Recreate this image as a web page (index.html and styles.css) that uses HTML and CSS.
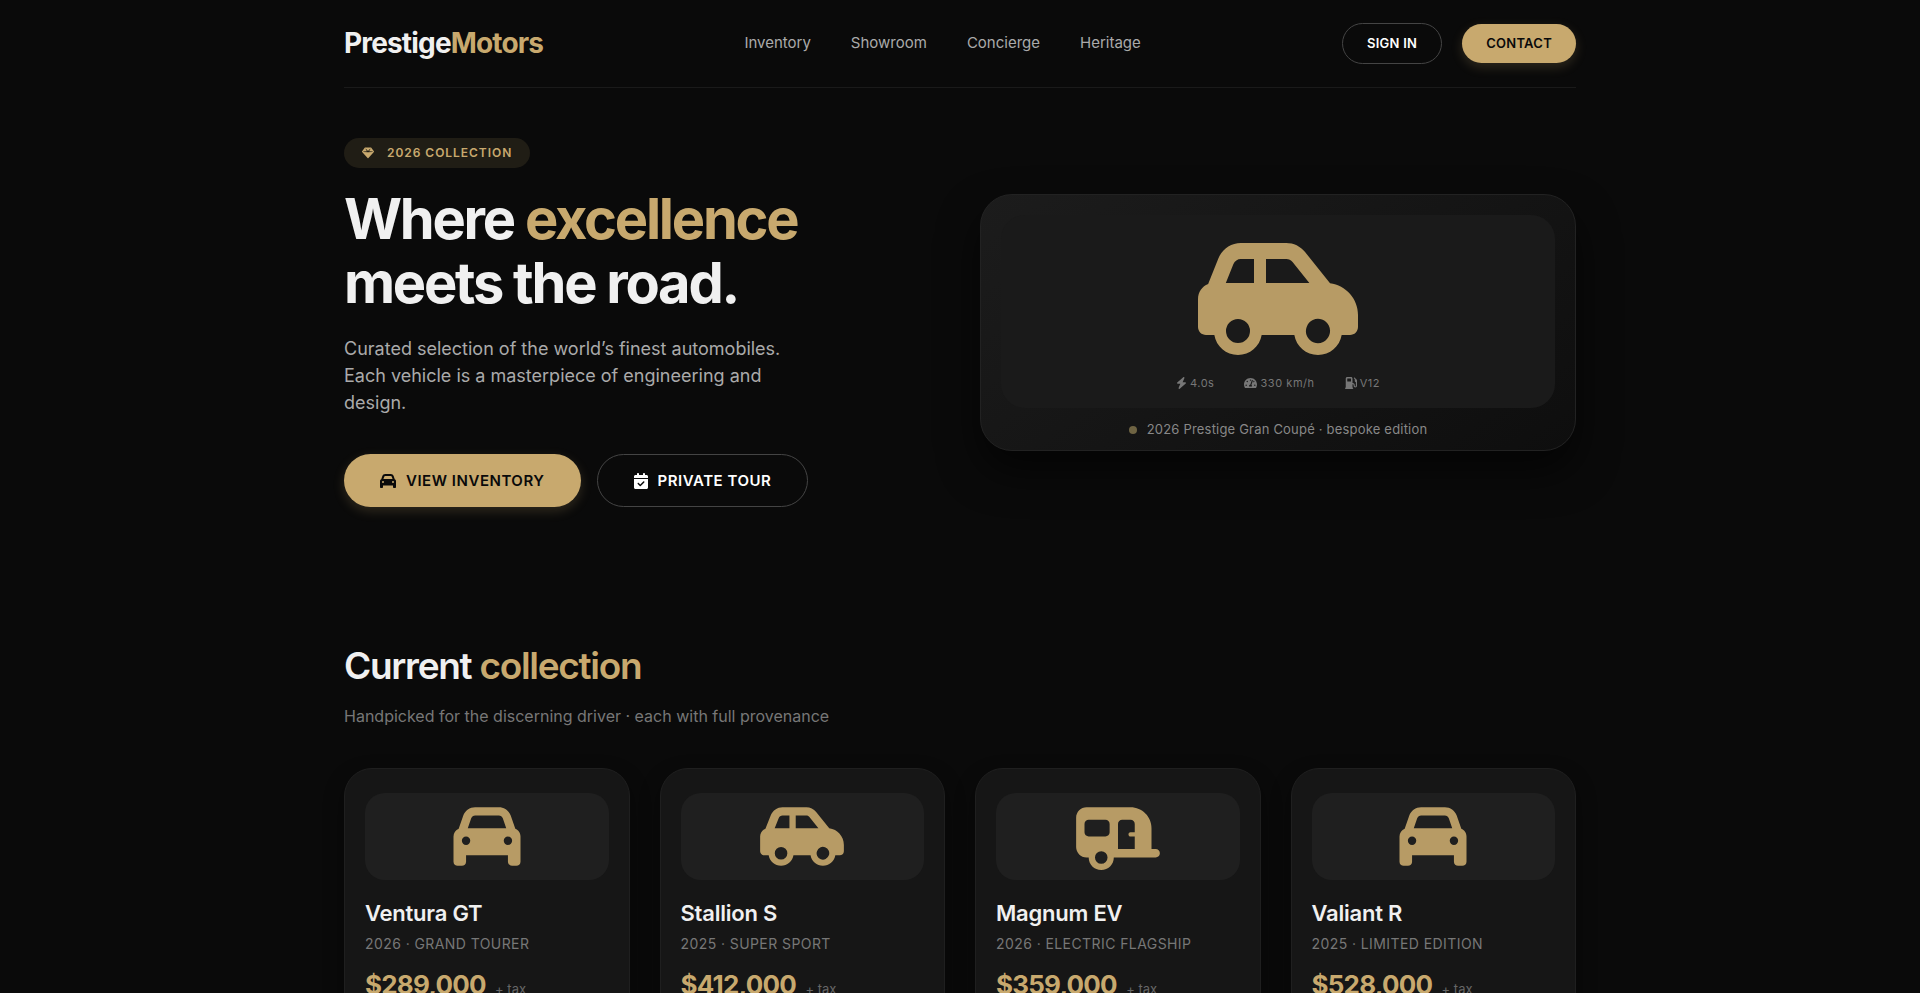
FILE: index.html
```html
<!DOCTYPE html>
<html lang="en">
<head>
    <meta charset="UTF-8">
    <meta name="viewport" content="width=device-width, initial-scale=1.0">
    <title>PrestigeMotors</title>
    <link rel="stylesheet" href="styles.css">
</head>
<body>
    <!-- shared icons -->
    <svg class="sprite" aria-hidden="true">
        <symbol id="i-car" viewBox="0 0 512 512"><path d="M135.2 117.4L109.1 192H402.9l-26.1-74.6C372.3 104.6 360.2 96 346.6 96H165.4c-13.6 0-25.7 8.6-30.2 21.4zM39.6 196.8L74.8 96.3C88.3 57.8 124.6 32 165.4 32H346.6c40.8 0 77.1 25.8 90.6 64.3l35.2 100.5c23.2 9.6 39.6 32.5 39.6 59.2V400v48c0 17.7-14.3 32-32 32H448c-17.7 0-32-14.3-32-32V400H96v48c0 17.7-14.3 32-32 32H32c-17.7 0-32-14.3-32-32V400 256c0-26.7 16.4-49.6 39.6-59.2zM128 288a32 32 0 1 0 -64 0 32 32 0 1 0 64 0zm288 32a32 32 0 1 0 0-64 32 32 0 1 0 0 64z"/></symbol>
        <symbol id="i-car-side" viewBox="0 0 640 512"><path d="M171.3 96H224v96H111.3l30.4-75.9C146.5 104 158.2 96 171.3 96zM272 192V96h81.2c9.7 0 18.9 4.4 25 12l67.2 84H272zm256.2 1L428.2 68c-18.2-22.8-45.8-36-75-36H171.3c-39.3 0-74.6 23.9-89.1 60.3L40.6 196.4C16.8 205.8 0 228.9 0 256V368c0 17.7 14.3 32 32 32H65.3c7.6 45.4 47.1 80 94.7 80s87.1-34.6 94.7-80H385.3c7.6 45.4 47.1 80 94.7 80s87.1-34.6 94.7-80H608c17.7 0 32-14.3 32-32V320c0-65.2-48.8-119-111.8-127zM434.7 368a48 48 0 1 1 90.5 32 48 48 0 1 1 -90.5-32zM160 336a48 48 0 1 1 0 96 48 48 0 1 1 0-96z"/></symbol>
        <symbol id="i-caravan" viewBox="0 0 640 512"><path d="M0 112C0 67.8 35.8 32 80 32H416c88.4 0 160 71.6 160 160V352h32c17.7 0 32 14.3 32 32s-14.3 32-32 32l-32 0H288c0 53-43 96-96 96s-96-43-96-96H80c-44.2 0-80-35.8-80-80V112zM320 352H448V256H416c-8.8 0-16-7.2-16-16s7.2-16 16-16h32V160c0-17.7-14.3-32-32-32H352c-17.7 0-32 14.3-32 32V352zM96 128c-17.7 0-32 14.3-32 32v64c0 17.7 14.3 32 32 32H224c17.7 0 32-14.3 32-32V160c0-17.7-14.3-32-32-32H96zm96 336a48 48 0 1 0 0-96 48 48 0 1 0 0 96z"/></symbol>
    </svg>

    <div class="container">
        <header class="navbar">
            <div class="logo">Prestige<span>Motors</span></div>
            <nav class="nav-links">
                <a href="#">Inventory</a>
                <a href="#">Showroom</a>
                <a href="#">Concierge</a>
                <a href="#">Heritage</a>
            </nav>
            <div class="nav-actions">
                <button class="btn btn-outline">Sign in</button>
                <button class="btn btn-gold">Contact</button>
            </div>
        </header>

        <section class="hero">
            <div class="hero-text">
                <div class="hero-badge">
                    <svg class="icon-badge" viewBox="0 0 512 512"><path d="M116.7 33.8c4.5-6.1 11.7-9.8 19.3-9.8H376c7.6 0 14.8 3.6 19.3 9.8l112 152c6.8 9.2 6.1 21.9-1.5 30.4l-232 256c-4.5 5-11 7.9-17.8 7.9s-13.2-2.9-17.8-7.9l-232-256c-7.7-8.5-8.3-21.2-1.5-30.4l112-152zm38.5 39.8c-3.3 2.5-4.2 7-2.1 10.5l57.4 95.6L63.3 192c-4.1 .3-7.3 3.8-7.3 8s3.2 7.6 7.3 8l192 16c.4 0 .9 0 1.3 0l192-16c4.1-.3 7.3-3.8 7.3-8s-3.2-7.6-7.3-8L301.5 179.8l57.4-95.6c2.1-3.5 1.2-8.1-2.1-10.5s-7.9-2-10.7 1L256 172.2 165.9 74.6c-2.8-3-7.4-3.4-10.7-1z"/></svg>
                    2026 collection
                </div>
                <h1>Where <span>excellence</span><br>meets the road.</h1>
                <p>Curated selection of the world’s finest automobiles. Each vehicle is a masterpiece of engineering and design.</p>
                <div class="hero-actions">
                    <button class="btn btn-gold btn-large">
                        <svg class="icon-btn"><use href="#i-car"/></svg>
                        View inventory
                    </button>
                    <button class="btn btn-outline btn-large">
                        <svg class="icon-btn icon-calendar" viewBox="0 0 448 512"><path d="M128 0c17.7 0 32 14.3 32 32V64H288V32c0-17.7 14.3-32 32-32s32 14.3 32 32V64h48c26.5 0 48 21.5 48 48v48H0V112C0 85.5 21.5 64 48 64H96V32c0-17.7 14.3-32 32-32zM0 192H448V464c0 26.5-21.5 48-48 48H48c-26.5 0-48-21.5-48-48V192zM329 305c9.4-9.4 9.4-24.6 0-33.9s-24.6-9.4-33.9 0l-95 95-47-47c-9.4-9.4-24.6-9.4-33.9 0s-9.4 24.6 0 33.9l64 64c9.4 9.4 24.6 9.4 33.9 0L329 305z"/></svg>
                        Private tour
                    </button>
                </div>
            </div>

            <div class="hero-card">
                <div class="hero-visual">
                    <svg class="icon-hero"><use href="#i-car-side"/></svg>
                    <div class="hero-specs">
                        <span>
                            <svg class="icon-spec icon-bolt" viewBox="0 0 448 512"><path d="M349.4 44.6c5.9-13.7 1.5-29.7-10.6-38.5s-28.6-8-39.9 1.8l-256 224c-10 8.8-13.6 22.9-8.9 35.3S50.7 288 64 288H175.5L98.6 467.4c-5.9 13.7-1.5 29.7 10.6 38.5s28.6 8 39.9-1.8l256-224c10-8.8 13.6-22.9 8.9-35.3s-16.6-20.7-30-20.7H272.5L349.4 44.6z"/></svg>
                            4.0s
                        </span>
                        <span>
                            <svg class="icon-spec icon-gauge" viewBox="0 0 576 512"><path d="M288 32C128.94 32 0 160.94 0 320c0 52.8 14.25 102.26 39.06 144.8 5.61 9.62 16.3 15.2 27.44 15.2h443c11.14 0 21.83-5.58 27.44-15.2C561.75 422.26 576 372.8 576 320c0-159.06-128.94-288-288-288zm0 64c14.71 0 26.58 10.13 30.32 23.65-1.11 2.26-2.64 4.23-3.45 6.67l-9.22 27.67c-5.13 3.49-10.97 6.01-17.64 6.01-17.67 0-32-14.33-32-32S270.33 96 288 96zM96 384c-17.67 0-32-14.33-32-32s14.33-32 32-32 32 14.33 32 32-14.33 32-32 32zm48-160c-17.67 0-32-14.33-32-32s14.33-32 32-32 32 14.33 32 32-14.33 32-32 32zm246.77-72.41l-61.33 184C343.13 347.33 352 364.54 352 384c0 11.72-3.38 22.55-8.88 32H232.88c-5.5-9.45-8.88-20.28-8.88-32 0-33.94 26.5-61.43 59.9-63.59l61.34-184.01c4.17-12.56 17.73-19.45 30.36-15.17 12.57 4.19 19.35 17.79 15.17 30.36zm14.66 57.2l15.52-46.55c3.47-1.29 7.13-2.23 11.05-2.23 17.67 0 32 14.33 32 32s-14.33 32-32 32c-11.38-.01-21.25-6.09-26.57-15.22zM480 384c-17.67 0-32-14.33-32-32s14.33-32 32-32 32 14.33 32 32-14.33 32-32 32z"/></svg>
                            330 km/h
                        </span>
                        <span>
                            <svg class="icon-spec icon-pump" viewBox="0 0 512 512"><path d="M32 64C32 28.7 60.7 0 96 0H256c35.3 0 64 28.7 64 64V256h8c48.6 0 88 39.4 88 88v32c0 13.3 10.7 24 24 24s24-10.7 24-24V222c-27.6-7.1-48-32.2-48-62V96L384 64c-8.8-8.8-8.8-23.2 0-32s23.2-8.8 32 0l77.3 77.3c12 12 18.7 28.3 18.7 45.3V376c0 39.8-32.2 72-72 72s-72-32.2-72-72V344c0-22.1-17.9-40-40-40h-8V448c17.7 0 32 14.3 32 32s-14.3 32-32 32H32c-17.7 0-32-14.3-32-32s14.3-32 32-32V64zM96 80v96c0 8.8 7.2 16 16 16H240c8.8 0 16-7.2 16-16V80c0-8.8-7.2-16-16-16H112c-8.8 0-16 7.2-16 16z"/></svg>
                            V12
                        </span>
                    </div>
                </div>
                <div class="hero-caption"><i class="dot"></i>2026 Prestige Gran Coupé · bespoke edition</div>
            </div>
        </section>

        <section class="collection">
            <h2>Current <span>collection</span></h2>
            <p class="section-sub">Handpicked for the discerning driver · each with full provenance</p>

            <div class="car-grid">
                <article class="car-card">
                    <div class="car-image"><svg class="icon-car"><use href="#i-car"/></svg></div>
                    <h3>Ventura GT</h3>
                    <div class="car-type">2026 · Grand Tourer</div>
                    <div class="car-price">$289,000 <small>+ tax</small></div>
                </article>
                <article class="car-card">
                    <div class="car-image"><svg class="icon-car"><use href="#i-car-side"/></svg></div>
                    <h3>Stallion S</h3>
                    <div class="car-type">2025 · Super Sport</div>
                    <div class="car-price">$412,000 <small>+ tax</small></div>
                </article>
                <article class="car-card">
                    <div class="car-image"><svg class="icon-car"><use href="#i-caravan"/></svg></div>
                    <h3>Magnum EV</h3>
                    <div class="car-type">2026 · Electric Flagship</div>
                    <div class="car-price">$359,000 <small>+ tax</small></div>
                </article>
                <article class="car-card">
                    <div class="car-image"><svg class="icon-car"><use href="#i-car"/></svg></div>
                    <h3>Valiant R</h3>
                    <div class="car-type">2025 · Limited Edition</div>
                    <div class="car-price">$528,000 <small>+ tax</small></div>
                </article>
            </div>
        </section>
    </div>
</body>
</html>
```

FILE: styles.css
```css
* {
    margin: 0;
    padding: 0;
    box-sizing: border-box;
}

html {
    scrollbar-width: none;
}

body {
    font-family: Inter, "Liberation Sans", sans-serif;
    background-color: #0a0a0a;
    color: #f0f0f0;
    line-height: 1.5;
}

svg {
    fill: currentColor;
    flex-shrink: 0;
}

.sprite {
    display: none;
}

.container {
    max-width: 1280px;
    margin: 0 auto;
    padding: 0 24px;
}

/* navigation */
.navbar {
    display: flex;
    justify-content: space-between;
    align-items: center;
    padding: 22px 0;
    border-bottom: 1px solid #1a1a1a;
}

.logo {
    font-size: 28px;
    font-weight: 700;
    line-height: 43px;
    letter-spacing: -0.03em;
}

.logo span,
h1 span,
h2 span {
    color: #c8a96e;
}

.nav-links {
    display: flex;
    gap: 40px;
}

.nav-links a {
    color: #aaa;
    font-size: 15px;
    text-decoration: none;
}

.nav-actions {
    display: flex;
    align-items: center;
    gap: 20px;
}

.btn {
    font-family: inherit;
    font-size: 13px;
    font-weight: 600;
    line-height: 19px;
    letter-spacing: 0.02em;
    text-transform: uppercase;
    padding: 10px 24px;
    border: none;
    border-radius: 40px;
    cursor: pointer;
}

.btn-gold {
    background-color: #c8a96e;
    color: #0a0a0a;
    box-shadow: 0 4px 12px rgba(200, 169, 110, 0.2);
}

.btn-outline {
    background-color: transparent;
    color: #fff;
    border: 1px solid #444;
}

/* hero */
.hero {
    display: grid;
    grid-template-columns: 1fr 1fr;
    gap: 40px;
    align-items: center;
    padding: 50px 0 70px;
}

.hero-badge {
    display: inline-flex;
    align-items: center;
    gap: 13px;
    padding: 6px 18px;
    border-radius: 30px;
    background-color: rgba(200, 169, 110, 0.12);
    color: #c8a96e;
    font-size: 12px;
    font-weight: 600;
    letter-spacing: 0.08em;
    text-transform: uppercase;
}

.icon-badge {
    width: 12px;
    height: 12px;
}

h1 {
    margin: 19px 0 20px;
    font-size: 56px;
    font-weight: 700;
    line-height: 64px;
    letter-spacing: -0.04em;
}

.hero-text p {
    max-width: 480px;
    margin-bottom: 38px;
    color: #aaa;
    font-size: 18px;
}

.hero-actions {
    display: flex;
    gap: 16px;
}

.btn-large {
    display: flex;
    align-items: center;
    gap: 10px;
    padding: 16px 36px;
    font-size: 15px;
    letter-spacing: 0.035em;
}

.icon-btn {
    width: 16px;
    height: 16px;
}

.icon-calendar {
    width: 14px;
}

.hero-card {
    padding: 20px 20px 10px;
    border: 1px solid #222;
    border-radius: 32px;
    background: linear-gradient(145deg, #1c1c1c, #0e0e0e);
    box-shadow: 0 20px 40px rgba(0, 0, 0, 0.6);
}

.hero-visual {
    display: flex;
    flex-direction: column;
    align-items: center;
    gap: 14px;
    padding: 20px 20px 19px;
    border-radius: 24px;
    background-color: #1a1a1a;
}

.icon-hero {
    width: 160px;
    height: 128px;
    color: #b79b65;
}

.hero-specs {
    display: flex;
    gap: 30px;
    color: #777;
    font-size: 11px;
    line-height: 12px;
    letter-spacing: 0.05em;
}

.hero-specs span {
    display: flex;
    align-items: center;
    gap: 3px;
}

.icon-spec {
    width: 12px;
    height: 12px;
}

.icon-bolt {
    width: 11px;
}

.icon-gauge {
    width: 13px;
}

.hero-caption {
    display: flex;
    justify-content: center;
    align-items: center;
    gap: 10px;
    margin-top: 12px;
    color: #888;
    font-size: 13px;
    letter-spacing: 0.015em;
}

.dot {
    width: 8px;
    height: 8px;
    border-radius: 50%;
    background-color: #6f6443;
}

/* collection */
.collection {
    padding: 60px 0;
}

h2 {
    font-size: 37px;
    font-weight: 600;
    line-height: 57px;
    letter-spacing: -0.035em;
}

.section-sub {
    margin: 10px 0 40px;
    color: #777;
    font-size: 16px;
}

.car-grid {
    display: grid;
    grid-template-columns: repeat(4, 1fr);
    gap: 30px;
}

.car-card {
    padding: 24px 20px;
    border: 1px solid #1f1f1f;
    border-radius: 28px;
    background-color: #161616;
    box-shadow: 0 8px 20px rgba(0, 0, 0, 0.4);
}

.car-image {
    display: flex;
    justify-content: center;
    margin-bottom: 17px;
    padding: 10px;
    border-radius: 20px;
    background-color: #1f1f1f;
}

.icon-car {
    width: 84px;
    height: 67px;
    color: #b79b65;
}

h3 {
    font-size: 22px;
    font-weight: 600;
    letter-spacing: -0.01em;
}

.car-type {
    margin: 3px 0 11px;
    color: #777;
    font-size: 14px;
    letter-spacing: 0.03em;
    text-transform: uppercase;
}

.car-price {
    color: #c8a96e;
    font-size: 26px;
    font-weight: 700;
    letter-spacing: -0.03em;
}

.car-price small {
    margin-left: 4px;
    color: #666;
    font-size: 13px;
    font-weight: 400;
    letter-spacing: 0;
}
```
